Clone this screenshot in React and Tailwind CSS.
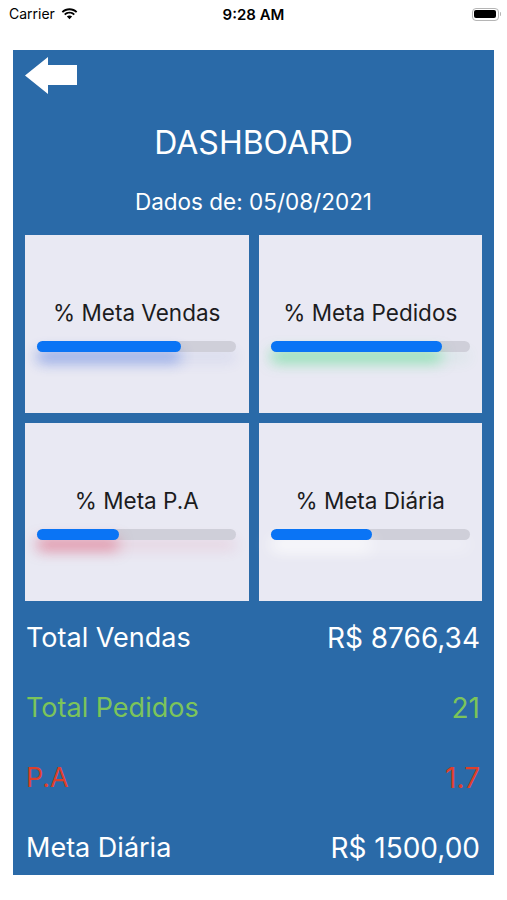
import React from 'react'

const metas = [
  { label: '% Meta Vendas', pct: 72, glow: 'shadow-[0_10px_14px_rgba(40,90,220,0.45)]', track: 'shadow-[0_10px_14px_rgba(60,90,200,0.1)]' },
  { label: '% Meta Pedidos', pct: 86, glow: 'shadow-[0_10px_14px_rgba(60,220,120,0.55)]', track: 'shadow-[0_10px_14px_rgba(60,200,120,0.08)]' },
  { label: '% Meta P.A', pct: 41, glow: 'shadow-[0_10px_14px_rgba(220,60,90,0.5)]', track: 'shadow-[0_10px_14px_rgba(220,60,100,0.12)]' },
  { label: '% Meta Diária', pct: 51, glow: 'shadow-[0_10px_16px_rgba(255,255,255,0.9)]', track: 'shadow-[0_10px_16px_rgba(255,255,255,0.4)]' },
]

const totals = [
  { label: 'Total Vendas', value: 'R$ 8766,34', color: 'text-white' },
  { label: 'Total Pedidos', value: '21', color: 'text-[#7cc45a]' },
  { label: 'P.A', value: '1.7', color: 'text-[#de3f2a]' },
  { label: 'Meta Diária', value: 'R$ 1500,00', color: 'text-white' },
]

function StatusBar() {
  return (
    <div className="relative h-[28px] flex items-center pl-[9px] pr-[6px] text-black">
      <span className="text-[14px] leading-none">Carrier</span>
      <svg className="ml-[6px]" width="17" height="12" viewBox="0 0 17 12">
        <path d="M8.5 2.2c2.5 0 4.8 1 6.5 2.6l1.3-1.3C14.2 1.5 11.5.3 8.5.3S2.8 1.5.7 3.5L2 4.8c1.7-1.6 4-2.6 6.5-2.6z" fill="black" />
        <path d="M8.5 5.6c1.6 0 3 .6 4.1 1.6l1.3-1.3C12.5 4.6 10.6 3.8 8.5 3.8S4.5 4.6 3.1 5.9l1.3 1.3c1.1-1 2.5-1.6 4.1-1.6z" fill="black" />
        <path d="M8.5 7.6c-1 0-1.9.4-2.6 1l2.6 2.7 2.6-2.7c-.7-.6-1.6-1-2.6-1z" fill="black" />
      </svg>
      <span className="absolute left-1/2 -translate-x-1/2 text-[15px] font-semibold leading-none">9:28 AM</span>
      <div className="ml-auto flex items-center">
        <div className="w-[27px] h-[13px] rounded-[4px] border border-[#b5b5b5] p-[1.5px]">
          <div className="w-full h-full rounded-[2px] bg-black" />
        </div>
        <div className="w-[1.5px] h-[4px] rounded-r bg-[#b5b5b5] ml-[1px]" />
      </div>
    </div>
  )
}

function MetaCard({ label, pct, glow, track }) {
  return (
    <div className="h-[178px] bg-[#e9e9f3] flex flex-col items-center pt-[64px]">
      <p className="text-[22.5px] leading-[28px] text-[#1c1c1e]">{label}</p>
      <div className={`mt-[14px] w-[199px] h-[11px] rounded-full bg-[#cfcfd9] ${track}`}>
        <div className={`h-full rounded-full bg-[#0a74f5] ${glow}`} style={{ width: `${pct}%` }} />
      </div>
    </div>
  )
}

export default function App() {
  return (
    <div className="min-h-[900px] bg-white" style={{ fontFamily: 'Inter, "Noto Sans", sans-serif' }}>
      <StatusBar />
      <div className="mt-[22px] ml-[13px] w-[481px] h-[825px] bg-[#2a6aa8] px-[12px] pt-[7px] text-white">
        <svg width="52" height="37" viewBox="0 0 52 37">
          <polygon points="0,18.5 23,0 23,8 52,8 52,28 23,28 23,37" fill="white" />
        </svg>
        <h1 className="mt-[31px] text-center text-[32px] leading-[36px] font-normal">DASHBOARD</h1>
        <p className="mt-[27px] text-center text-[22.5px] leading-[28px]">Dados de: 05/08/2021</p>
        <div className="mt-[19px] grid grid-cols-2 gap-[10px]">
          {metas.map((m) => (
            <MetaCard key={m.label} {...m} />
          ))}
        </div>
        <div className="mt-[19px] flex flex-col gap-[34px]">
          {totals.map((t) => (
            <div key={t.label} className={`flex justify-between items-center text-[27px] leading-[36px] pl-[1px] pr-[2px] ${t.color}`}>
              <span>{t.label}</span>
              <span className="text-[28px]">{t.value}</span>
            </div>
          ))}
        </div>
      </div>
    </div>
  )
}
